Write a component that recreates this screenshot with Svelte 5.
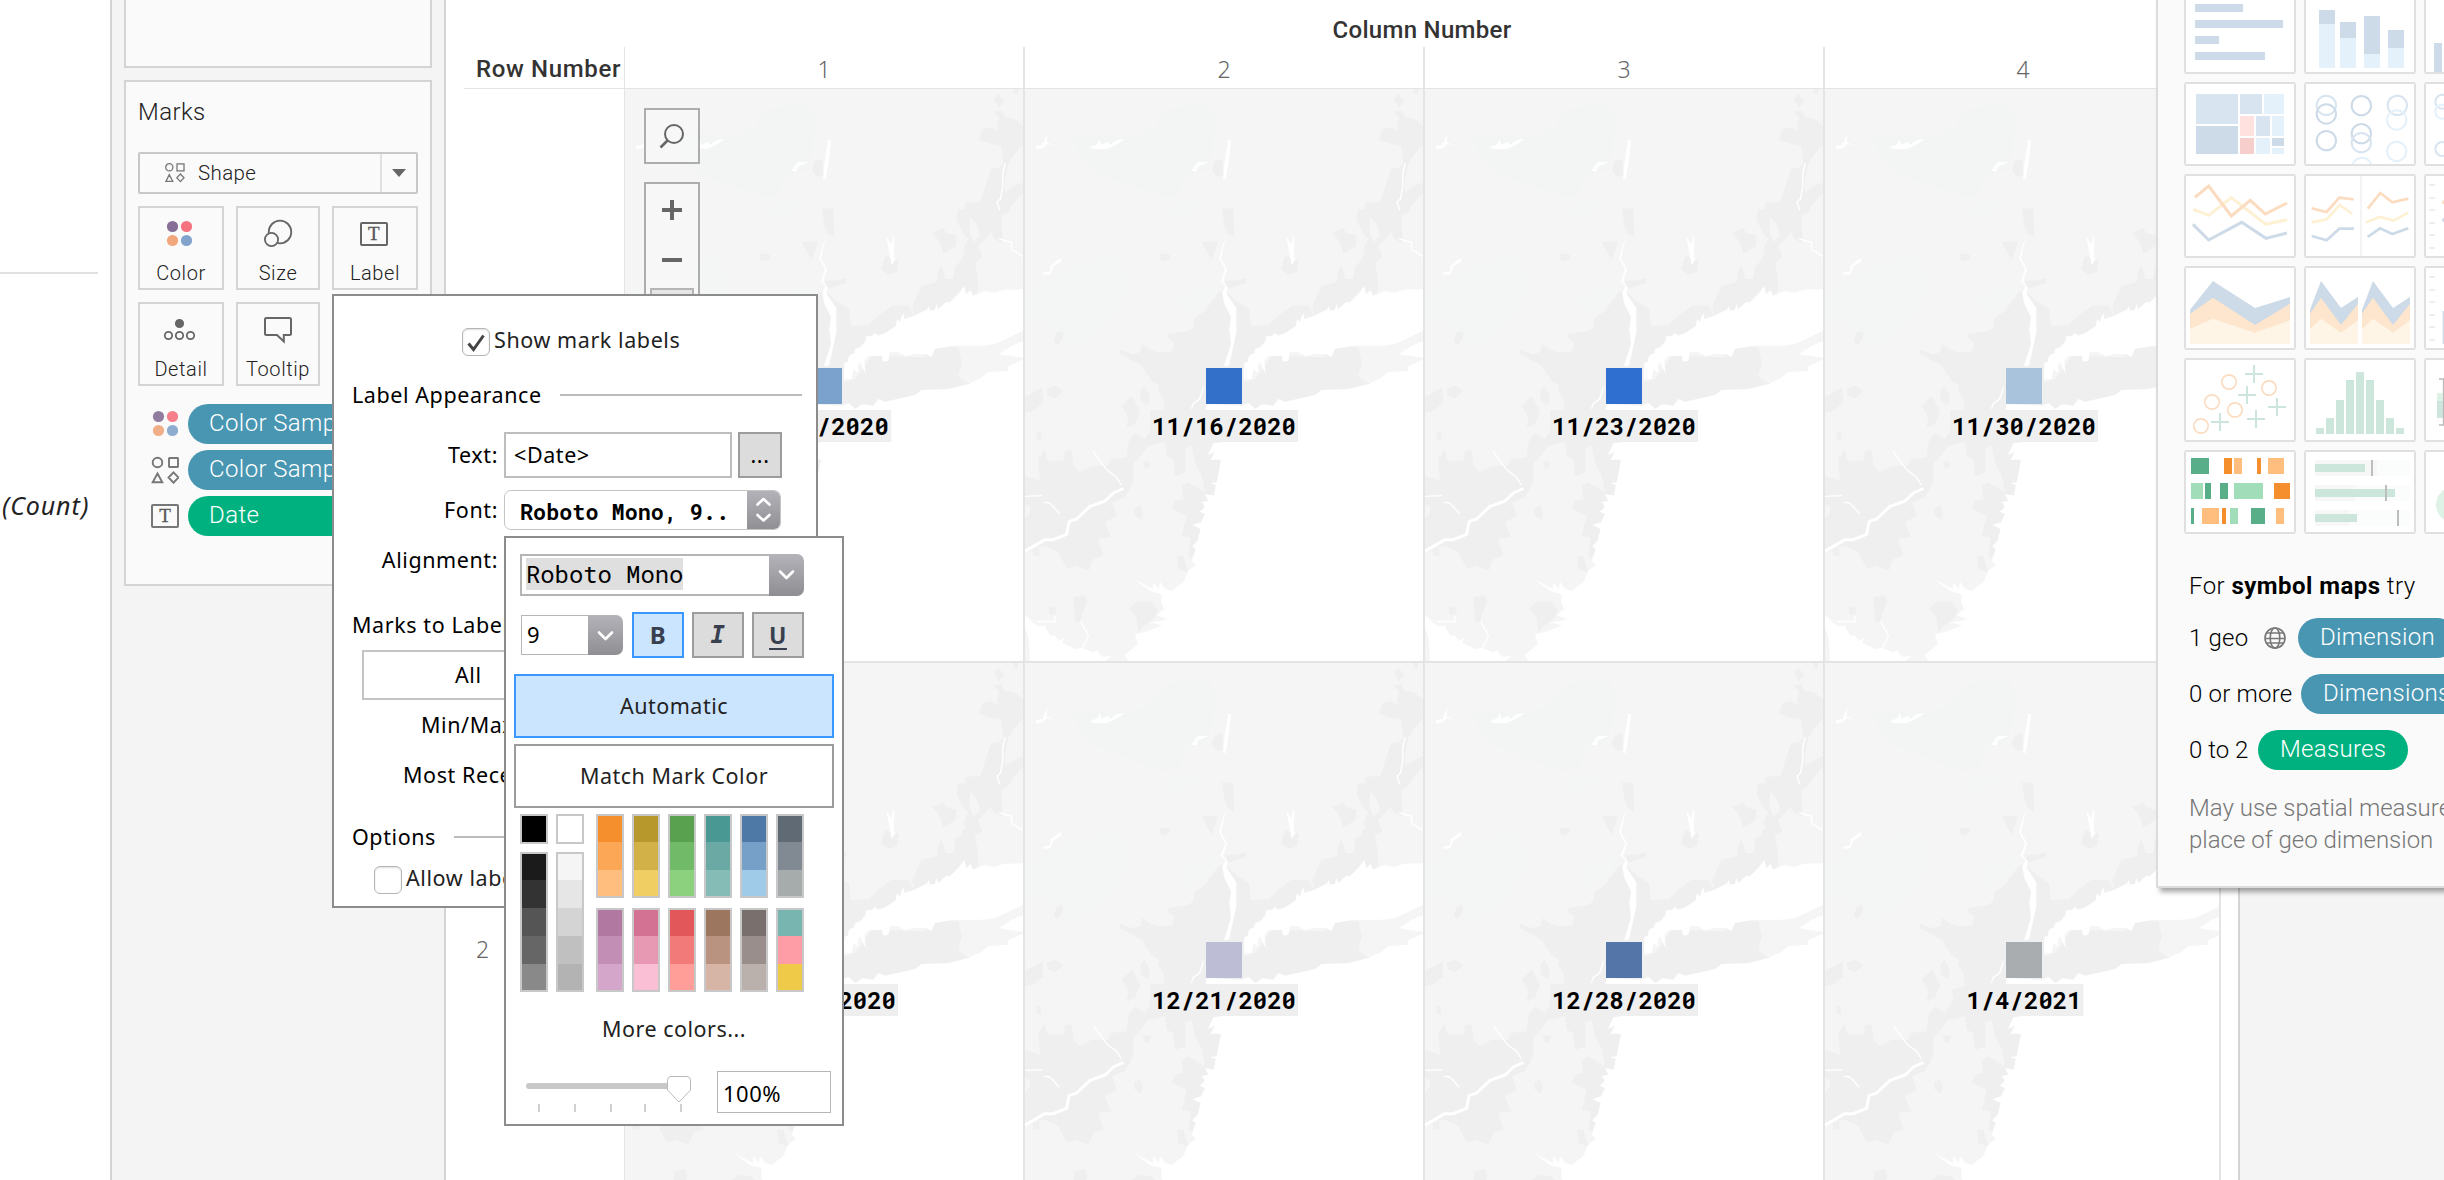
<script>
  const dates = [
    [
      { date: '11/9/2020', color: '#7ba2cd' },
      { date: '11/16/2020', color: '#3370ca' },
      { date: '11/23/2020', color: '#2f6fd0' },
      { date: '11/30/2020', color: '#a9c3dd' }
    ],
    [
      { date: '12/14/2020', color: '#5c86c0' },
      { date: '12/21/2020', color: '#bdbed6' },
      { date: '12/28/2020', color: '#5475a8' },
      { date: '1/4/2021', color: '#a9adb0' }
    ]
  ];

  const grays = [
    [['#000000'], ['#1b1b1b', '#333333', '#555555', '#666666', '#898989']],
    [['#ffffff'], ['#f5f5f5', '#e6e6e6', '#d4d4d4', '#c0c0c0', '#b3b3b3']]
  ];
  const swatches = [
    [['#f58f2d', '#fba755', '#ffbe7d'], ['#b179a1', '#c28eb5', '#d4a6c9']],
    [['#b6982c', '#d2b248', '#f1ce63'], ['#d47294', '#e799b4', '#fabfd4']],
    [['#59a14f', '#71ba67', '#8cd17e'], ['#e1575a', '#f27a79', '#ff9d99']],
    [['#499893', '#6aa9a4', '#86bcb6'], ['#9d7660', '#ba9380', '#d7b5a6']],
    [['#4e79a7', '#76a0c7', '#a0cbe8'], ['#79706e', '#998e8b', '#bab0ac']],
    [['#606a74', '#818a92', '#a5acab'], ['#79b5b0', '#ff9da7', '#eeca48']]
  ];

  const bins = [[498, 504], [528, 474], [558, 420], [588, 360], [618, 336], [648, 360], [678, 420], [708, 474], [738, 504]];
  const gantt = [
    [123, 594, 54, '#59ae8a'], [222, 594, 24, '#f58f2d'], [252, 594, 24, '#ffbe7d'], [321, 594, 12, '#f58f2d'], [354, 594, 48, '#ffbe7d'],
    [123, 669, 36, '#a0ddb8'], [165, 669, 18, '#59ae8a'], [210, 669, 24, '#59ae8a'], [252, 669, 87, '#a0ddb8'], [372, 669, 48, '#f58f2d'],
    [123, 744, 9, '#59ae8a'], [156, 744, 51, '#ffbe7d'], [216, 744, 12, '#f58f2d'], [240, 744, 24, '#a0ddb8'], [303, 744, 42, '#59ae8a'], [378, 744, 24, '#ffbe7d']
  ];
  const tree = [
    [138, 282, 126, 90, '#d8e5f0'], [138, 378, 126, 84, '#cddae7'], [270, 282, 66, 60, '#d8e5f0'], [342, 282, 60, 60, '#e4f1fb'],
    [270, 348, 42, 60, '#ffe2df'], [318, 348, 42, 60, '#d8e5f0'], [366, 348, 36, 60, '#e4f1fb'], [270, 414, 42, 48, '#f6cfcd'],
    [318, 414, 42, 48, '#e4f1fb'], [366, 414, 36, 24, '#cddae7'], [366, 444, 36, 18, '#e4f1fb']
  ];
  const rings = [
    [529, 316, '#d8e5f0'], [529, 342, '#cddae7'], [529, 422, '#cddae7'], [634, 317, '#cddae7'], [634, 401, '#cddae7'], [634, 428, '#d8e5f0'],
    [636, 502, '#e4f1fb'], [742, 316, '#d8e5f0'], [740, 360, '#e4f1fb'], [740, 454, '#e4f1fb']
  ];
  const dots = [[237, 366], [357, 384], [186, 426], [255, 450], [153, 498]];
  const pluses = [[312, 342], [291, 405], [381, 441], [210, 486], [318, 477]];
</script>

{#snippet colorDots(x, y)}
  <circle cx={x} cy={y} r="5.6" fill="#866f96" />
  <circle cx={x + 14} cy={y} r="5.6" fill="#f7727f" />
  <circle cx={x} cy={y + 14} r="5.6" fill="#f2a67b" />
  <circle cx={x + 14} cy={y + 14} r="5.6" fill="#82a4cc" />
{/snippet}

{#snippet basemap()}
  <svg class="basemap" viewBox="0 0 1194 1716" preserveAspectRatio="none">
    <rect width="1194" height="1716" fill="#f5f5f5" />
    <g fill="#f3f5f4">
      <path d="M140 150L190 140L330 142L395 110L410 65L470 55L530 42L560 60L575 90L565 170L555 215L545 245L480 260L460 320L420 325L340 300L260 270L190 238L160 190Z" />
      <path fill="#f4f5f5" d="M430 350L540 320L520 360L440 395ZM0 615L120 540L270 500L320 580L250 700L140 780L120 750L60 700L0 690ZM460 620L580 580L560 640L480 670Z" />
    </g>
    <g fill="#efefef">
      <path d="M580 610L600 605L640 640L672 660L678 710L730 708L760 680L800 650L850 650L868 682L862 650L890 590L935 580L940 545L950 530L962 570L985 570L990 530L1010 515L1018 470L1030 450L1012 430L994 390L1000 360L1020 362L1020 342L1066 338L1085 280L1098 240L1120 236L1135 225L1128 170L1100 165L1062 152L1072 120L1100 115L1115 125L1122 85L1104 68L1130 64L1140 84L1170 90L1194 110L1194 165L1165 200L1150 225L1142 262L1140 310L1165 292L1194 280L1194 310L1160 350L1150 370L1130 380L1132 462L1108 450L1098 430L1080 450L1060 470L1072 505L1050 520L1058 560L1060 605L1030 640L950 670L850 710L740 750L660 830L655 880L690 870L740 800L900 805L930 770L1000 775L1010 820L1000 860L1020 880L1050 885L1000 900L900 925L780 945L700 965L610 970L595 1080L580 1180L545 1260L525 1350L505 1410L490 1400L497 1345L470 1340L485 1280L440 1260L450 1235L475 1230L470 1190L490 1180L540 1210L530 1160L510 1120L500 1070L480 1080L482 1150L450 1160L445 1110L425 1100L420 1060L370 1070L340 1110L325 1120L325 1180L300 1225L262 1240L275 1280L240 1300L258 1345L220 1350L235 1400L205 1410L190 1445L150 1430L125 1440L100 1390L60 1370L0 1380L0 1290L15 1270L15 1250L0 1245L0 1160L45 1175L40 1110L60 1080L68 1115L115 1115L120 1085L140 1085L145 1130L165 1150L200 1130L250 1130L255 1110L305 1105L310 1060L330 1030L360 1050L385 1010L380 980L420 970L415 930L390 890L370 860L350 830L285 795L285 782L320 796L345 790L352 765L375 782L400 790L440 788L448 762L428 745L430 735L490 725L505 715L508 688L540 665Z" />
      <path d="M1105 30L1122 16L1137 35L1122 55ZM1163 0H1180L1175 18L1165 12ZM560 245L570 215L592 210L594 262L575 262ZM592 357L625 360L628 445L608 435L598 410ZM530 460L580 457L560 515ZM600 575L640 574L665 567L662 582L610 600ZM402 506C405 490 430 490 438 502C430 520 408 520 402 506ZM768 540L780 502L822 512L815 550L790 558ZM922 432L955 418L965 432L995 440L992 470L955 495L945 460ZM86 760L95 730L112 725L115 740L100 767Z" />
      <path d="M0 925L52 895L55 940L25 965L0 970ZM65 900L90 890L115 905L90 928L68 920ZM345 905L358 890L375 920L370 948L348 935ZM290 950L320 920L345 965L330 1005L305 1015L310 985ZM355 1118H378L370 1140L356 1138ZM327 1260L345 1248L355 1270L348 1292L330 1280ZM456 1402L475 1400L490 1450L460 1440ZM145 1525L180 1518L187 1540L172 1570L165 1598H150ZM312 1558L340 1535L380 1540L400 1565L380 1595L355 1610L340 1632L335 1590ZM22 1380L42 1375L45 1400L25 1400ZM72 1555L90 1552L96 1575L72 1578ZM34 1030H48V1055L36 1050Z" />
    </g>
    <g fill="#f5f5f5">
      <path d="M1035 385L1055 405L1066 440L1045 460L1035 435ZM1012 470L1022 500L1000 490ZM375 875L403 890L395 920L375 910Z" />
    </g>
    <g fill="#ffffff">
      <path d="M657 870L658 822L668 818L672 800L688 792L690 780L706 775L720 758L724 742L742 740L748 732L760 740L785 730L812 712L816 690L824 700L835 670L837 690L868 680L885 672L905 662L912 652L915 665L930 662L934 644L940 660L962 640L975 640L1004 610L1018 591L1024 616L1036 604L1045 620L1080 606L1110 612L1135 602L1194 601L1194 725L1160 742L1110 765L1070 770L985 770L930 780L918 805L905 795L870 795L840 802L820 790L795 790L790 815L775 818L770 800L730 802L718 815L722 856L705 820L698 830L700 852L686 840L680 870Z" />
      <path d="M1194 757L1160 770L1122 796L1150 800L1194 806ZM1194 812L1150 832L1148 845L1090 850L1070 866L1030 885L970 900L890 903L870 918L780 938L760 930L745 950L710 946L692 960L670 942L650 950L545 945L540 968L600 1050L590 1060L566 1062L548 1098L570 1088L556 1112L588 1112L575 1180L556 1182L572 1188L568 1220L540 1215L550 1235L530 1240L540 1254L524 1268L540 1275L528 1300L503 1308L527 1320L518 1355L502 1372L512 1380L500 1415L513 1428L490 1445L475 1480L440 1505L420 1500L405 1478L402 1500L385 1480L384 1500L325 1470L380 1508L410 1515L408 1540L418 1560L395 1578L428 1592L375 1600L412 1610L350 1632L330 1635L338 1665L300 1698L310 1716H1194Z" />
      <path d="M0 1578L35 1610L60 1612L75 1640L92 1640L100 1655L118 1648L112 1662L150 1680L170 1676L205 1690L215 1684L232 1704L262 1700L240 1716H15L12 1650L0 1618Z" />
      <path d="M605 430L582 508L600 540L587 578L602 590L592 612L598 645L618 685L613 720L618 765L597 830H612L634 730V658L605 614L608 594L594 578L606 540L588 508Z" />
      <path d="M610 152H618L612 210L602 270H594L600 210ZM498 245L520 218L550 220L520 232L514 248ZM195 175L218 165L225 150L228 168L250 158L255 168L275 154L300 150L268 170L245 180L205 180ZM32 182L35 170L52 168L68 134L64 160L90 170L68 165L52 178ZM54 550L75 548L78 528L108 508V518L85 532L76 556L56 557ZM784 444L800 468L804 444H808L806 505L812 510L800 528L792 485Z" />
    </g>
    <g fill="none" stroke="#ffffff" stroke-linecap="round" stroke-linejoin="round">
      <path d="M0 1386L60 1352L85 1352L125 1336L132 1298L155 1290L195 1252L240 1236L265 1212L292 1200" stroke-width="9" />
      <path d="M288 1186L275 1165L245 1142L205 1088M1140 225L1133 255L1134 290L1126 330L1116 340L1124 362M1124 450L1160 460V482L1194 502M0 1222L50 1220M58 1240L75 1242L102 1272M500 958L504 944L524 930L535 895M36 1598H90V1582M168 1598L190 1640L172 1678" stroke-width="4" />
    </g>
  </svg>
{/snippet}

{#snippet strip(colors)}
  <div class="strip">
    {#each colors as c}<i style:background={c}></i>{/each}
  </div>
{/snippet}

<div class="app">
  <section class="data-pane">
    <div class="rule"></div>
    <em>(Count)</em>
  </section>

  <aside class="shelves">
    <div class="card filters"></div>
    <div class="card marks">
      <h2>Marks</h2>
      <div class="mark-type">
        <svg width="20" height="20" viewBox="0 0 20 20" fill="none" stroke="#777" stroke-width="1.3">
          <circle cx="4.3" cy="4.3" r="3.6" /><rect x="12" y=".9" width="7" height="7" />
          <path d="M4.3 11.6L.9 18.4H7.8ZM15.4 11L19 14.8L15.4 18.6L11.8 14.8Z" />
        </svg>
        <span>Shape</span>
        <b><svg width="14" height="8" viewBox="0 0 14 8"><path d="M0 0H14L7 8Z" fill="#666" /></svg></b>
      </div>
      <div class="buttons">
        <div class="btn">
          <svg width="82" height="50">{@render colorDots(32.5, 18.5)}</svg>Color
        </div>
        <div class="btn">
          <svg width="80" height="50" fill="#fafafa" stroke="#666" stroke-width="1.8"><circle cx="42" cy="24" r="11.3" /><circle cx="33.5" cy="31.5" r="6.6" /></svg>Size
        </div>
        <div class="btn">
          <svg width="82" height="50"><rect x="27" y="15" width="26" height="22" rx="1" fill="none" stroke="#666" stroke-width="2" /><text x="40" y="32" class="tee">T</text></svg>Label
        </div>
        <div class="btn">
          <svg width="82" height="50" fill="none" stroke="#666" stroke-width="1.8"><circle cx="39.5" cy="19.5" r="3.7" fill="#666" /><circle cx="28.5" cy="31.5" r="3.7" /><circle cx="39.5" cy="31.5" r="3.7" /><circle cx="50.5" cy="31.5" r="3.7" /></svg>Detail
        </div>
        <div class="btn">
          <svg width="80" height="50" fill="none" stroke="#666" stroke-width="2"><path d="M28.5 14H51.5Q53 14 53 15.5V29.5Q53 31 51.5 31H45.8V37.5L39 31H28.5Q27 31 27 29.5V15.5Q27 14 28.5 14Z" /></svg>Tooltip
        </div>
      </div>
      <div class="fields">
        <div class="field">
          <svg width="28" height="28" viewBox="0 0 28 28" opacity=".9">{@render colorDots(7.5, 6.5)}</svg>
          <span class="pill">Color Sample</span>
        </div>
        <div class="field">
          <svg width="28" height="28" viewBox="0 0 28 28" fill="none" stroke="#777" stroke-width="1.9">
            <circle cx="6.5" cy="6.5" r="4.8" /><rect x="18" y="2" width="9" height="9" rx=".5" />
            <path d="M6.5 17.5L1.7 26.2H11.3ZM22.5 16.3L27.5 21.5L22.5 26.7L17.5 21.5Z" />
          </svg>
          <span class="pill">Color Sample</span>
        </div>
        <div class="field">
          <svg width="28" height="28" viewBox="0 0 28 28"><rect x="1" y="3" width="26" height="22" rx="1" fill="none" stroke="#777" stroke-width="2" /><text x="14" y="20" class="tee">T</text></svg>
          <span class="pill green">Date</span>
        </div>
      </div>
    </div>
  </aside>

  <main class="sheet">
    <div class="col-title">Column Number</div>
    <div class="headers">
      <div class="row-title">Row Number</div>
      {#each [1, 2, 3, 4] as n}<div class="col-head">{n}</div>{/each}
    </div>
    {#each dates as row, r}
      <div class="map-row">
        <div class="row-head">{r + 1}</div>
        {#each row as cell}
          <div class="cell">
            {@render basemap()}
            <div class="mark" style:background={cell.color}></div>
            <div class="mark-label">{cell.date}</div>
          </div>
        {/each}
      </div>
    {/each}
    <div class="map-tools">
      <div class="tool search">
        <svg width="52" height="52" fill="none" stroke="#666" stroke-width="2"><circle cx="28" cy="24" r="9" /><path d="M21.5 30.5L14.5 37.5" stroke-width="2.6" /></svg>
      </div>
      <div class="tool zoom">
        <svg width="52" height="110" fill="#666"><path d="M24 16h4v8h8v4h-8v8h-4v-8h-8v-4h8ZM16 74h20v4h-20Z" /></svg>
        <div class="home"></div>
      </div>
    </div>
  </main>

  <aside class="gutter"></aside>
</div>

<div class="show-me">
  <div class="charts">
    <div class="chart">
      <svg viewBox="108 -24 324 240" fill="#cddae7"><path d="M135 12h144v24h-144ZM135 60h264v24h-264ZM135 108h72v24h-72ZM135 156h210v24h-210Z" /></svg>
    </div>
    <div class="chart">
      <svg viewBox="468 -24 324 240"><path fill="#e4f1fb" d="M507 72h48v132h-48ZM570 114h48v90h-48ZM642 162h48v42h-48ZM714 144h48v60h-48Z" /><path fill="#cddae7" d="M507 30h48v42h-48ZM570 66h48v48h-48ZM642 48h48v114h-48ZM714 90h48v54h-48Z" /></svg>
    </div>
    <div class="chart">
      <svg viewBox="828 -24 324 240"><path fill="#cddae7" d="M852 129h24v87h-24Z" /></svg>
    </div>

    <div class="chart">
      <svg viewBox="108 252 324 240">{#each tree as [x, y, w, h, c]}<rect {x} {y} width={w} height={h} fill={c} />{/each}</svg>
    </div>
    <div class="chart">
      <svg viewBox="468 252 324 240" fill="none" stroke-width="6">{#each rings as [x, y, c]}<circle cx={x} cy={y} r="29" stroke={c} />{/each}</svg>
    </div>
    <div class="chart">
      <svg viewBox="828 252 324 240" fill="none" stroke-width="6"><circle cx="877" cy="305" r="21" stroke="#d8e5f0" /><circle cx="877" cy="335" r="21" stroke="#e4f1fb" /><circle cx="877" cy="447" r="21" stroke="#d8e5f0" /></svg>
    </div>

    <div class="chart">
      <svg viewBox="108 528 324 240" fill="none" stroke-width="9"><path stroke="#fdf0d3" d="M130 628L176 646L244 593L348 673L411 659" /><path stroke="#fbdcc0" d="M135 592L176 558L244 648L301 601L346 642L411 609" /><path stroke="#cddae7" d="M129 673L176 720L275 667L348 715L411 699" /></svg>
    </div>
    <div class="chart">
      <svg viewBox="468 528 324 240" fill="none" stroke-width="8"><path stroke="#f2f2f2" stroke-width="5" d="M633 528V768" /><path stroke="#fdf0d3" d="M485 667L530 658L569 615L607 642M648 667L690 651L731 662L775 638" /><path stroke="#fbdcc0" d="M485 625L530 636L568 593L611 598M653 626L691 579L727 607L775 596" /><path stroke="#cddae7" d="M485 708L530 721L568 686H612M653 711L690 685L727 702L775 685" /></svg>
    </div>
    <div class="chart">
      <svg viewBox="828 528 324 240"><path stroke="#eee" stroke-width="6" d="M837 555h18M837 594h18M837 630h18M837 669h18M837 705h18M837 744h18" /><circle cx="882" cy="607" r="6" fill="#fbdcc0" /><circle cx="882" cy="660" r="6" fill="#cddae7" /></svg>
    </div>

    <div class="chart">
      <svg viewBox="108 24 324 240"><path fill="#cddae7" d="M120 149L189 63L315 144L420 111V252H120Z" /><path fill="#fde6cd" d="M120 161L189 113L315 195L420 131V252H120Z" /><path fill="#fef5e7" d="M120 207L189 176L315 218L420 181V252H120Z" /></svg>
    </div>
    <div class="chart">
      <svg viewBox="468 24 324 240">
        {#each [480, 636] as x}
          <g transform="translate({x} 0)"><path fill="#cddae7" d="M0 149L33 63L93 144L144 111V252H0Z" /><path fill="#fde6cd" d="M0 161L33 113L93 195L144 131V252H0Z" /><path fill="#fef5e7" d="M0 207L33 176L93 218L144 181V252H0Z" /></g>
        {/each}
      </svg>
    </div>
    <div class="chart">
      <svg viewBox="828 24 324 240"><path stroke="#eee" stroke-width="6" d="M837 51h18M837 90h18M837 126h18M837 165h18M837 201h18M837 240h18" /><path fill="#cddae7" d="M878 153h10v99h-10Z" /></svg>
    </div>

    <div class="chart">
      <svg viewBox="108 300 324 240" fill="none" stroke-width="6">
        {#each dots as [x, y]}<circle cx={x} cy={y} r="21.5" stroke="#fbdcc0" stroke-width="5" />{/each}
        {#each pluses as [x, y]}<path stroke="#cde6db" d="M{x - 27} {y}h54M{x} {y - 27}v54" />{/each}
      </svg>
    </div>
    <div class="chart">
      <svg viewBox="468 300 324 240" fill="#cde6db">{#each bins as [x, y]}<rect {x} {y} width="24" height={522 - y} />{/each}</svg>
    </div>
    <div class="chart">
      <svg viewBox="828 300 324 240"><path fill="#dff2e6" d="M861 399h21v24h-21Z" /><path fill="#cde6db" d="M861 423h21v51h-21Z" /><path fill="none" stroke="#bbb" stroke-width="5" d="M867 357H890M867 495H890M881 357V495" /></svg>
    </div>

    <div class="chart">
      <svg viewBox="108 576 324 240">{#each gantt as [x, y, w, c]}<rect {x} {y} width={w} height="48" fill={c} />{/each}</svg>
    </div>
    <div class="chart">
      <svg viewBox="468 576 324 240"><path fill="#fbfdfc" d="M495 600h285v48h-285ZM495 675h285v48h-285ZM495 750h285v48h-285Z" /><path fill="#f7f7f7" d="M495 600h186v48h-186ZM495 675h120v48h-120ZM495 750h102v48h-102Z" /><path fill="#cde6db" d="M495 612h150v24h-150ZM495 687h240v24h-240ZM495 762h126v24h-126Z" /><path fill="#bdbdbd" d="M663 600h6v48h-6ZM705 675h6v48h-6ZM741 750h6v48h-6Z" /></svg>
    </div>
    <div class="chart">
      <svg viewBox="828 576 324 240"><circle cx="912" cy="734" r="54" fill="#dff2e6" /></svg>
    </div>
  </div>
  <div class="hint">
    <p class="for">For <b>symbol maps</b> try</p>
    <p class="need">
      <span class="geo">1 geo</span>
      <svg width="22" height="22" viewBox="0 0 22 22" fill="none" stroke="#777" stroke-width="1.6"><circle cx="11" cy="11" r="10" /><ellipse cx="11" cy="11" rx="4.8" ry="10" /><path d="M2 6H20M1 11.5H21M2 16H20" /></svg>
      <span class="pill dim">Dimension</span>
    </p>
    <p class="need"><span class="more">0 or more</span><span class="pill dims">Dimensions</span></p>
    <p class="need"><span class="to">0 to 2</span><span class="pill green">Measures</span></p>
    <p class="note">May use spatial measures in<br />place of geo dimension</p>
  </div>
</div>

<div class="dialog">
  <div class="show"><span class="check"><svg width="26" height="26" viewBox="0 0 26 26"><path d="M5.5 14.5L10.5 20.5L20.5 6.5" fill="none" stroke="#444" stroke-width="3" /></svg></span>Show mark labels</div>
  <div class="group"><span>Label Appearance</span><hr /></div>
  <div class="row text-row">
    <label for="label-text">Text:</label>
    <span class="input" id="label-text">&lt;Date&gt;</span>
    <span class="dots">...</span>
  </div>
  <div class="row font-row">
    <label for="label-font">Font:</label>
    <span class="select" id="label-font">Roboto Mono, 9..
      <b><svg width="33" height="40" fill="none" stroke="#fff" stroke-width="2.6" stroke-linecap="round" stroke-linejoin="round"><path d="M10.500 14.5L16.5 9L22.5 14.5M10.5 25L16.5 30.5L22.5 25" /></svg></b>
    </span>
  </div>
  <div class="row align-row"><span class="lab">Alignment:</span></div>
  <div class="line marks-line">Marks to Label</div>
  <div class="choice">All</div>
  <div class="line min-line">Min/Max</div>
  <div class="line recent-line">Most Recent</div>
  <div class="group options"><span>Options</span><hr /></div>
  <div class="allow"><span class="check"></span><span class="allow-text">Allow labels</span></div>
</div>

<div class="font-popup">
  <div class="combo family"><span><mark>Roboto Mono</mark></span><b><svg width="35" height="40" fill="none" stroke="#fff" stroke-width="2.6" stroke-linecap="round" stroke-linejoin="round"><path d="M11 17.5L17.5 24L24 17.5" /></svg></b></div>
  <div class="style-row">
    <div class="combo size"><span>9</span><b><svg width="35" height="40" fill="none" stroke="#fff" stroke-width="2.6" stroke-linecap="round" stroke-linejoin="round"><path d="M11 17.5L17.5 24L24 17.5" /></svg></b></div>
    <div class="toggle on">B</div>
    <div class="toggle it">I</div>
    <div class="toggle un">U</div>
  </div>
  <div class="wide on">Automatic</div>
  <div class="wide">Match Mark Color</div>
  <div class="palette">
    {#each grays as col}
      <div class="ramp gray">{#each col as s}{@render strip(s)}{/each}</div>
    {/each}
    {#each swatches as col}
      <div class="ramp">{#each col as s}{@render strip(s)}{/each}</div>
    {/each}
  </div>
  <div class="more-colors">More colors...</div>
  <div class="opacity">
    <svg width="170" height="42" viewBox="0 0 170 42">
      <path d="M5 15H145" stroke="#c8c8c8" stroke-width="6" stroke-linecap="round" />
      <path d="M15 33v8M51 33v8M87 33v8M121 33v8M157 33v8" stroke="#d0d0d0" stroke-width="2" />
      <path d="M147 5.5H163Q166.5 5.5 166.5 9V19L155 31L143.5 19V9Q143.5 5.5 147 5.5Z" fill="#fff" stroke="#bbb" />
    </svg>
    <span>100%</span>
  </div>
</div>

<style>
  :global(body) {
    background: #fff;
    overflow: hidden;
  }
  .app {
    display: grid;
    grid-template-columns: 110px 336px 1792px 1fr;
    width: 2444px;
    height: 1180px;
    overflow: hidden;
    font-family: Roboto, 'Open Sans', sans-serif;
    font-weight: 300;
    color: #222;
  }
  h2, p { margin: 0; font-weight: inherit; }
  svg { display: block; flex: none; }

  .rule { margin-top: 272px; width: 98px; height: 2px; background: #e1e1e1; }
  .data-pane em { display: block; margin: 217px 0 0 2px; font: italic 25px/28px 'Noto Sans', sans-serif; letter-spacing: 0.9px; color: #222; white-space: nowrap; }

  .shelves {
    box-sizing: border-box;
    border: solid #d4d4d4;
    border-width: 0 2px;
    background: #f4f4f4;
    padding: 0 12px;
    display: flex;
    flex-direction: column;
    gap: 12px;
  }
  .card { box-sizing: border-box; border: 2px solid #d4d4d4; background: #fafafa; }
  .filters { height: 68px; border-top: 0; }
  .marks { height: 506px; padding: 16px 12px; overflow: hidden; }
  h2 { font-size: 24px; line-height: 28px; letter-spacing: 0.4px; }
  .mark-type {
    display: flex;
    align-items: center;
    box-sizing: border-box;
    width: 280px;
    height: 42px;
    margin-top: 26px;
    border: 2px solid #c8c8c8;
    border-radius: 2px;
    padding-left: 25px;
    font-size: 20.5px;
    letter-spacing: 0.4px;
  }
  .mark-type span { flex: 1; margin-left: 13px; }
  .mark-type b { display: grid; place-items: center; width: 34px; height: 100%; border-left: 2px solid #e0e0e0; }
  .buttons { display: grid; grid-template-columns: 86px 84px 86px; gap: 12px; margin-top: 12px; }
  .btn { box-sizing: border-box; height: 84px; border: 2px solid #d4d4d4; text-align: center; font-size: 20px; line-height: 30px; letter-spacing: 0.6px; }
  .tee { font: 19px 'Liberation Serif', serif; text-anchor: middle; fill: #555; stroke: #555; stroke-width: 0.3; }
  .fields { display: flex; flex-direction: column; gap: 6px; margin: 18px 0 0 13px; }
  .field { display: flex; align-items: center; gap: 9px; }
  .pill {
    box-sizing: border-box;
    height: 40px;
    border-radius: 20px;
    padding: 0 21px;
    background: #4996b2;
    color: #fff;
    font-size: 24px;
    font-weight: 300;
    line-height: 39px;
    white-space: nowrap;
    letter-spacing: 0.4px;
  }
  .field .pill { width: 226px; }
  .pill.green { background: #00b180; }

  .sheet { position: relative; box-sizing: border-box; height: 1180px; overflow: hidden; border-right: 2px solid #d4d4d4; width: 1794px; background: #fff; }
  .col-title { height: 47px; padding-left: 179px; width: 1594px; text-align: center; font: 500 24px/60px Roboto, sans-serif; letter-spacing: 0.3px; color: #333; }
  .headers { display: grid; grid-template-columns: 160px 399px 400px 400px 398px; height: 41px; border-bottom: 1px solid #e4e4e4; margin-left: 18px; width: 1757px; }
  .row-title { padding-left: 12px; font: 500 24px/45px Roboto, sans-serif; white-space: nowrap; letter-spacing: 0.65px; color: #333; }
  .col-head { border-left: 2px solid #e4e4e4; text-align: center; font: 300 23px/45px 'Noto Sans', sans-serif; color: #666; }
  .row-title + .col-head { border-left-width: 1px; }
  .map-row { display: grid; grid-template-columns: 179px 400px 400px 400px 396px; height: 574px; }
  .row-head { font: 300 23px/572px 'Noto Sans', sans-serif; color: #666; padding-left: 30px; border-right: 1px solid #e4e4e4; }
  .cell { position: relative; box-sizing: border-box; border: solid #e4e4e4; border-width: 0 2px 2px 0; overflow: hidden; }
  .basemap { width: 398px; height: 572px; }
  .mark { position: absolute; left: 181px; top: 279px; width: 36px; height: 36px; }
  .mark-label {
    position: absolute;
    left: 199px;
    top: 321px;
    transform: translateX(-50%);
    padding: 0 2px;
    background: #efefef;
    color: #000;
    font: 700 24px/32px 'Roboto Mono', 'DejaVu Sans Mono', monospace;
  }
  .map-tools { position: absolute; left: 198px; top: 108px; display: flex; flex-direction: column; gap: 18px; }
  .tool { box-sizing: border-box; width: 56px; border: 2px solid #adadad; background: rgba(246, 246, 246, 0.92); }
  .search { height: 56px; }
  .zoom { height: 200px; }
  .home { width: 40px; height: 40px; margin: -6px 0 0 4px; border: 2px solid #b5b5b5; background: #e6e6e6; }
  .gutter { background: #f4f4f4; margin-left: 2px; }

  .show-me {
    position: absolute;
    left: 2156px;
    top: 0;
    box-sizing: border-box;
    width: 288px;
    height: 888px;
    overflow: hidden;
    border: solid #dcdcdc;
    border-width: 0 0 2px 2px;
    background: #fafafa;
    box-shadow: 4px 4px 5px rgba(0, 0, 0, 0.35);
    font-family: Roboto, sans-serif;
    color: #000;
  }
  .charts { display: grid; grid-template-columns: repeat(3, 112px); gap: 8px; margin: -10px 0 0 26px; }
  .chart { box-sizing: border-box; height: 84px; border: 2px solid #e0e0e0; border-radius: 3px; background: #fff; }
  .chart svg { width: 108px; height: 80px; }
  .hint { margin: 37px 0 0 31px; font-size: 24px; font-weight: 300; white-space: nowrap; }
  .for { line-height: 30px; height: 30px; letter-spacing: 0.45px; }
  .for b { font-weight: 700; }
  .need { display: flex; align-items: center; height: 40px; margin-top: 16px; }
  .for + .need { margin-top: 17px; }
  .need span { flex: none; }
  .geo { width: 75px; letter-spacing: 0.2px; }
  .dim { margin-left: 12px; }
  .more { width: 112px; letter-spacing: 0.2px; }
  .to { width: 69px; }
  .need .pill { padding: 0 22px; letter-spacing: 0.3px; }
  .note { margin-top: 22px; line-height: 32px; color: #777; }

  .dialog {
    position: absolute;
    left: 332px;
    top: 294px;
    box-sizing: border-box;
    width: 486px;
    height: 614px;
    border: 2px solid #8c8c8c;
    background: #fff;
    overflow: hidden;
    font: 21.5px/30px 'Noto Sans', sans-serif;
    letter-spacing: 0.58px;
    color: #000;
  }
  .show { display: flex; align-items: center; height: 88px; padding-left: 128px; color: #222; gap: 4px; }
  .check { box-sizing: border-box; width: 28px; height: 28px; border: 1px solid #b5b5b5; border-radius: 6px; box-shadow: inset 0 1px 2px #ddd; }
  .show .check { margin-top: 4px; }
  .group { display: flex; align-items: center; height: 22px; padding: 0 14px 0 18px; gap: 18px; white-space: nowrap; }
  .group hr { flex: 1; border: 0; height: 2px; margin: 0; background: #bcbcbc; }
  .row { display: flex; align-items: center; }
  .row label, .lab { width: 164px; margin-right: 6px; text-align: right; }
  .text-row { margin-top: 26px; height: 46px; }
  .input { box-sizing: border-box; width: 228px; height: 46px; border: 2px solid #bdbdbd; padding-left: 8px; line-height: 42px; }
  .dots { box-sizing: border-box; width: 44px; height: 46px; margin-left: 6px; border: 2px solid #9c9c9c; background: #dcdcdc; text-align: center; line-height: 42px; }
  .font-row { margin-top: 12px; height: 40px; }
  .select {
    position: relative;
    display: flex;
    align-items: center;
    justify-content: space-between;
    box-sizing: border-box;
    width: 277px;
    height: 40px;
    border: 1px solid #c4c4c4;
    border-radius: 7px;
    padding: 3px 0 0 15px;
    overflow: hidden;
    font: 700 21.8px/36px 'Roboto Mono', 'DejaVu Sans Mono', monospace;
    letter-spacing: 0;
    white-space: nowrap;
  }
  .select b { background: linear-gradient(#b3b3b9, #8e8e93); margin-top: -3px; }
  .align-row { margin-top: 6px; height: 48px; }
  .line { height: 50px; line-height: 50px; white-space: nowrap; }
  .marks-line { margin-top: 16px; padding-left: 18px; }
  .choice { box-sizing: border-box; width: 300px; height: 50px; margin-left: 28px; border: 2px solid #c4c4c4; padding-left: 91px; line-height: 46px; }
  .min-line { padding-left: 87px; }
  .recent-line { padding-left: 69px; }
  .options { margin-top: 8px; height: 58px; }
  .allow { display: flex; align-items: center; gap: 4px; height: 28px; padding-left: 40px; color: #222; }
  .allow-text { margin-top: -5px; }

  .font-popup {
    position: absolute;
    left: 504px;
    top: 536px;
    box-sizing: border-box;
    width: 340px;
    height: 590px;
    border: 2px solid #8c8c8c;
    background: #fff;
    padding: 16px 8px 0;
    font: 21.5px/30px 'Noto Sans', sans-serif;
    letter-spacing: 0.5px;
    color: #222;
  }
  .combo { display: flex; box-sizing: border-box; border-radius: 0 7px 7px 0; overflow: hidden; color: #000; }
  .combo span { flex: 1; box-sizing: border-box; border: 2px solid #b5b5b5; border-right: 0; }
  .combo b { width: 35px; background: linear-gradient(#b3b3b9, #8e8e93); }
  .family { width: 284px; height: 42px; margin-left: 6px; }
  .family span { padding: 2px 4px; }
  .family mark { display: inline-block; height: 32px; background: #dfdfdf; color: #000; font: 24px/32px 'Roboto Mono', 'DejaVu Sans Mono', monospace; letter-spacing: -0.1px; }
  .style-row { display: flex; align-items: center; gap: 8px; height: 46px; margin: 16px 0 0 7px; }
  .style-row .toggle + .toggle { margin-left: 0; }
  .size { width: 102px; height: 40px; margin-right: 1px; }
  .size span { border-width: 1px; padding-left: 5px; line-height: 36px; font-size: 22px; }
  .toggle { box-sizing: border-box; width: 52px; height: 46px; border: 2px solid #9c9c9c; background: #dcdcdc; color: #38404f; text-align: center; font-weight: 700; font-size: 24px; line-height: 42px; }
  .on { background: #cbe5ff; border-color: #3a97fb; }
  .it { font-family: 'DejaVu Sans Mono', monospace; font-style: italic; }
  .un { text-decoration: underline; text-underline-offset: 4px; text-decoration-thickness: 2px; font-size: 23px; }
  .wide { box-sizing: border-box; width: 320px; height: 64px; border: 2px solid #9c9c9c; margin-top: 6px; text-align: center; line-height: 59px; }
  .wide.on { margin-top: 16px; border-color: #3a97fb; }
  .palette { display: flex; gap: 8px; margin: 6px 0 0 6px; }
  .ramp { display: flex; flex-direction: column; gap: 10px; width: 28px; height: 178px; }
  .gray { gap: 8px; }
  .gray + .ramp:not(.gray) { margin-left: 4px; }
  .strip { display: flex; flex-direction: column; border: 2px solid #c8c8c8; }
  .strip i { height: 28px; }
  .strip i:first-child, .strip i:last-child { height: 26px; }
  .more-colors { margin-top: 22px; text-align: center; line-height: 30px; }
  .opacity { display: flex; margin: 27px 0 0 10px; }
  .opacity span { box-sizing: border-box; width: 114px; height: 42px; margin-left: 23px; border: 1px solid #b5b5b5; padding-left: 5px; font-size: 22px; line-height: 42px; color: #000; }
</style>
